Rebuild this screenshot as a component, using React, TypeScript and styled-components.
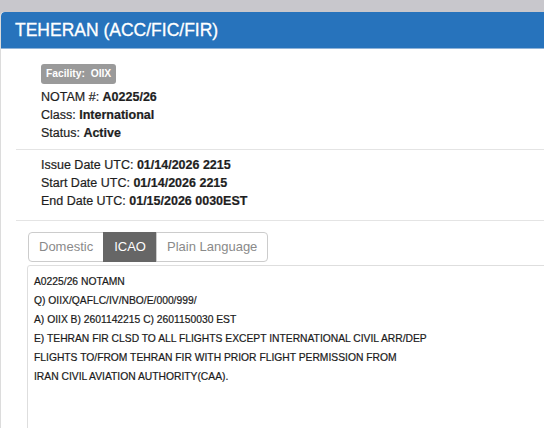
import { useState } from 'react';
import styled, { createGlobalStyle } from 'styled-components';

const GlobalStyle = createGlobalStyle`
  html, body {
    margin: 0;
    padding: 0;
    background: #c8c7cc;
    overflow: hidden;
  }
  body {
    font-family: "Liberation Sans", Arial, sans-serif;
    color: #222;
  }
`

const Panel = styled.div`
  margin-top: 12px;
  width: 570px;
  height: 440px;
  background: #fff;
  border-left: 1px solid #dcdcdc;
  border-top-left-radius: 4px;
  overflow: hidden;
`

const Header = styled.div`
  height: 36px;
  display: flex;
  align-items: center;
  padding-left: 14px;
  background: #2773bc;
  border-bottom: 1px solid #8fb3d8;
  border-top-left-radius: 4px;
  color: #fff;
  font-size: 17.5px;
  -webkit-text-stroke: 0.3px #fff;
`

const Section = styled.div`
  padding: ${p => p.$top}px 0 ${p => p.$bottom}px 25px;
  margin-left: 15px;
  border-bottom: 1px solid #e4e4e4;
`

const Badge = styled.span`
  display: inline-flex;
  align-items: center;
  height: 20px;
  padding: 0 5px;
  border-radius: 3px;
  background: #9a9a9a;
  color: #fff;
  font-size: 10.3px;
  font-weight: bold;
  margin-bottom: 4px;
`

const Line = styled.div`
  font-size: 12.5px;
  line-height: 18px;
  color: #1e1e1e;
  -webkit-text-stroke: 0.2px #1e1e1e;
  b {
    font-weight: bold;
  }
`

const TabRow = styled.div`
  display: flex;
  margin: 11px 0 3px 27px;
`

const Tab = styled.button`
  height: 30px;
  padding: 0 10px;
  font-family: inherit;
  font-size: 13px;
  border: 1px solid ${p => (p.$active ? '#666' : '#ccc')};
  background: ${p => (p.$active ? '#666' : '#fff')};
  color: ${p => (p.$active ? '#fff' : '#8a8a8a')};
  margin-left: -1px;
  cursor: pointer;
  &:first-child {
    border-radius: 4px 0 0 4px;
    margin-left: 0;
  }
  &:last-child {
    border-radius: 0 4px 4px 0;
  }
`

const TextBox = styled.div`
  margin-left: 26px;
  border: 1px solid #dedede;
  border-radius: 3px;
  padding: 6px 6px;
  min-height: 200px;
  font-size: 10.3px;
  line-height: 19px;
  color: #1a1a1a;
  -webkit-text-stroke: 0.2px #1a1a1a;
`

const notamLines = [
  'A0225/26 NOTAMN',
  'Q) OIIX/QAFLC/IV/NBO/E/000/999/',
  'A) OIIX B) 2601142215 C) 2601150030 EST',
  'E) TEHRAN FIR CLSD TO ALL FLIGHTS EXCEPT INTERNATIONAL CIVIL ARR/DEP',
  'FLIGHTS TO/FROM TEHRAN FIR WITH PRIOR FLIGHT PERMISSION FROM',
  'IRAN CIVIL AVIATION AUTHORITY(CAA).',
]

const tabs = ['Domestic', 'ICAO', 'Plain Language']

const App = () => {
  const [tab, setTab] = useState('ICAO')

  return (
    <>
      <GlobalStyle />
      <Panel>
        <Header>TEHERAN (ACC/FIC/FIR)</Header>
        <Section $top={14} $bottom={7}>
          <Badge>Facility:&nbsp;&nbsp;OIIX</Badge>
          <Line>NOTAM #: <b>A0225/26</b></Line>
          <Line>Class: <b>International</b></Line>
          <Line>Status: <b>Active</b></Line>
        </Section>
        <Section $top={6} $bottom={10}>
          <Line>Issue Date UTC: <b>01/14/2026 2215</b></Line>
          <Line>Start Date UTC: <b>01/14/2026 2215</b></Line>
          <Line>End Date UTC: <b>01/15/2026 0030EST</b></Line>
        </Section>
        <TabRow>
          {tabs.map(t => (
            <Tab key={t} $active={tab === t} onClick={() => setTab(t)}>{t}</Tab>
          ))}
        </TabRow>
        <TextBox>
          {notamLines.map(l => <div key={l}>{l}</div>)}
        </TextBox>
      </Panel>
    </>
  )
}

export default App
